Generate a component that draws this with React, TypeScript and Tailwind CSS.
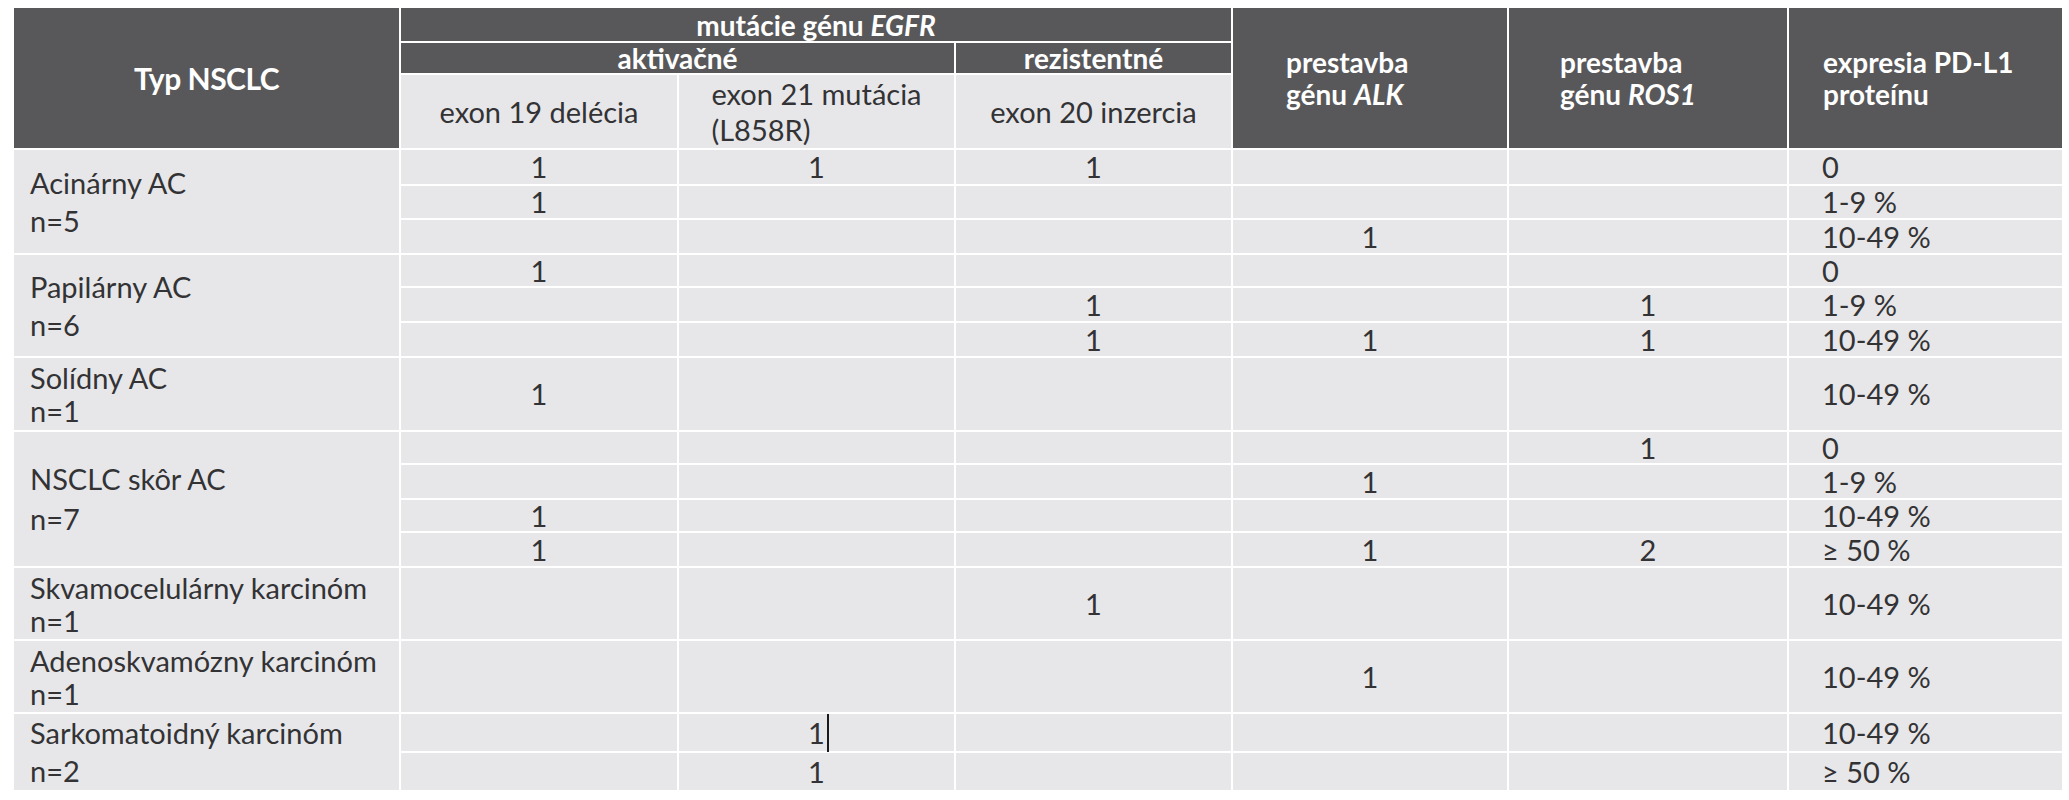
import React from 'react'

type Row = { cells: string[]; h: number }
type Group = { name: string; n: string; lead: string; rows: Row[] }

const groups: Group[] = [
  {
    name: 'Acinárny AC',
    n: 'n=5',
    lead: 'leading-[38px]',
    rows: [
      { cells: ['1', '1', '1', '', '', '0'], h: 36 },
      { cells: ['1', '', '', '', '', '1-9 %'], h: 34 },
      { cells: ['', '', '', '1', '', '10-49 %'], h: 35 },
    ],
  },
  {
    name: 'Papilárny AC',
    n: 'n=6',
    lead: 'leading-[38px]',
    rows: [
      { cells: ['1', '', '', '', '', '0'], h: 33 },
      { cells: ['', '', '1', '', '1', '1-9 %'], h: 35 },
      { cells: ['', '', '1', '1', '1', '10-49 %'], h: 35 },
    ],
  },
  {
    name: 'Solídny AC',
    n: 'n=1',
    lead: 'leading-[33px]',
    rows: [{ cells: ['1', '', '', '', '', '10-49 %'], h: 74 }],
  },
  {
    name: 'NSCLC skôr AC',
    n: 'n=7',
    lead: 'leading-[40px]',
    rows: [
      { cells: ['', '', '', '', '1', '0'], h: 33 },
      { cells: ['', '', '', '1', '', '1-9 %'], h: 35 },
      { cells: ['1', '', '', '', '', '10-49 %'], h: 33 },
      { cells: ['1', '', '', '1', '2', '≥ 50 %'], h: 35 },
    ],
  },
  {
    name: 'Skvamocelulárny karcinóm',
    n: 'n=1',
    lead: 'leading-[33px]',
    rows: [{ cells: ['', '', '1', '', '', '10-49 %'], h: 73 }],
  },
  {
    name: 'Adenoskvamózny karcinóm',
    n: 'n=1',
    lead: 'leading-[33px]',
    rows: [{ cells: ['', '', '', '1', '', '10-49 %'], h: 73 }],
  },
  {
    name: 'Sarkomatoidný karcinóm',
    n: 'n=2',
    lead: 'leading-[38px]',
    rows: [
      { cells: ['', '1|', '', '', '', '10-49 %'], h: 38 },
      { cells: ['', '1', '', '', '', '≥ 50 %'], h: 38 },
    ],
  },
]

const dark = 'bg-[#58585a] text-white font-bold'
const cell = 'border-2 border-white p-0'

function Value({ v }: { v: string }) {
  if (v === '1|') {
    return (
      <span className="relative inline-block">
        1
        <span className="absolute left-[calc(100%+2px)] top-[-4px] h-[38px] w-[2px] bg-[#1a1a1a]" />
      </span>
    )
  }
  return <>{v}</>
}

export default function App() {
  return (
    <div className="min-h-screen bg-white pl-[12px] pt-[6px] font-['Lato',sans-serif] text-[29px] text-[#333335]">
      <table className="table-fixed border-collapse bg-[#e7e7e9]">
        <colgroup>
          <col className="w-[387px]" />
          <col className="w-[278px]" />
          <col className="w-[277px]" />
          <col className="w-[277px]" />
          <col className="w-[276px]" />
          <col className="w-[280px]" />
          <col className="w-[275px]" />
        </colgroup>
        <thead>
          <tr className="h-[35px] leading-[30px]">
            <th rowSpan={3} className={`${cell} ${dark} text-center text-[30px] tracking-[-0.5px]`}>
              Typ NSCLC
            </th>
            <th colSpan={3} className={`${cell} ${dark} text-center text-[28px]`}>
              mutácie génu <i>EGFR</i>
            </th>
            <th rowSpan={3} className={`${cell} ${dark} pl-[53px] text-left text-[28px] leading-[32px]`}>
              prestavba
              <br />
              génu <i>ALK</i>
            </th>
            <th rowSpan={3} className={`${cell} ${dark} pl-[51px] text-left text-[28px] leading-[32px]`}>
              prestavba
              <br />
              génu <i>ROS1</i>
            </th>
            <th rowSpan={3} className={`${cell} ${dark} pl-[34px] text-left text-[28px] leading-[32px]`}>
              expresia PD-L1
              <br />
              proteínu
            </th>
          </tr>
          <tr className="h-[32px] leading-[30px]">
            <th colSpan={2} className={`${cell} ${dark} text-center text-[28px]`}>
              aktivačné
            </th>
            <th className={`${cell} ${dark} text-center text-[28px]`}>rezistentné</th>
          </tr>
          <tr className="h-[75px] font-normal">
            <th className={`${cell} text-center font-normal`}>exon 19 delécia</th>
            <th className={`${cell} text-center font-normal leading-[36px]`}>
              <span className="inline-block text-left">
                exon 21 mutácia
                <br />
                (L858R)
              </span>
            </th>
            <th className={`${cell} text-center font-normal`}>exon 20 inzercia</th>
          </tr>
        </thead>
        <tbody>
          {groups.map((g) =>
            g.rows.map((r, i) => (
              <tr key={g.name + i} style={{ height: r.h }} className="leading-[30px]">
                {i === 0 && (
                  <td rowSpan={g.rows.length} className={`${cell} pl-[16px] align-middle ${g.lead}`}>
                    {g.name}
                    <br />
                    {g.n}
                  </td>
                )}
                {r.cells.map((v, j) => (
                  <td key={j} className={`${cell} ${j === 5 ? 'pl-[33px] text-left' : 'text-center'} align-middle`}>
                    <Value v={v} />
                  </td>
                ))}
              </tr>
            )),
          )}
        </tbody>
      </table>
    </div>
  )
}
